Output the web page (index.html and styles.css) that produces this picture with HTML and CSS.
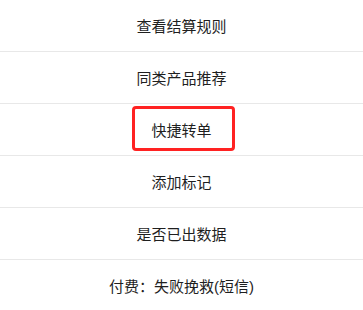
FILE: index.html
```html
<!DOCTYPE html>
<html lang="zh">
<head>
<meta charset="utf-8">
<link rel="stylesheet" href="styles.css">
</head>
<body>
<ul class="menu">
  <li class="item">查看结算规则</li>
  <li class="item">同类产品推荐</li>
  <li class="item item-marked">快捷转单<span class="mark"></span></li>
  <li class="item">添加标记</li>
  <li class="item">是否已出数据</li>
  <li class="item">付费：失败挽救(短信)</li>
</ul>
</body>
</html>
```
FILE: styles.css
```css
html, body {
  margin: 0;
  padding: 0;
  background: #fff;
}
.menu {
  list-style: none;
  margin: 0;
  padding: 0;
  width: 363px;
  font-family: "Liberation Sans", "Noto Sans CJK SC", sans-serif;
  font-size: 15px;
  color: #1f1f1f;
}
.item {
  height: 51px;
  display: flex;
  align-items: center;
  justify-content: center;
  border-bottom: 1px solid #e8e8e8;
}
.item-marked {
  position: relative;
}
.mark {
  position: absolute;
  left: 132px;
  top: 2px;
  width: 97px;
  height: 39px;
  border: 3px solid #ff2222;
  border-radius: 4px;
}
```
